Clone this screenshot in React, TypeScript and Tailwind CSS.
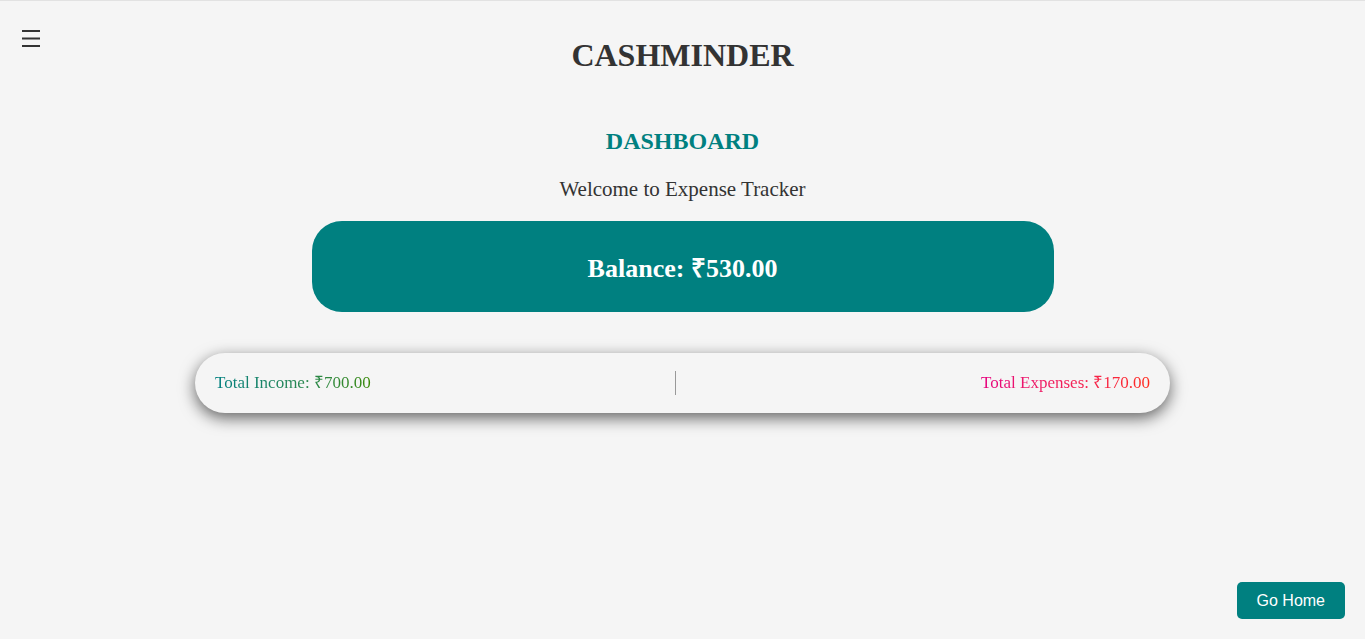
const income = 700;
const expenses = 170;

const fmt = (n: number) => `₹${n.toFixed(2)}`;

const MenuIcon = () => (
    <svg width="18" height="17" viewBox="0 0 18 17" fill="#333">
        <rect x="0" y="0" width="18" height="2" />
        <rect x="0" y="7.5" width="18" height="2" />
        <rect x="0" y="15" width="18" height="2" />
    </svg>
);

const App = () => {
    const balance = income - expenses;

    return (
        <div className="min-h-screen bg-[#f5f5f5] border-t border-[#e2e2e2] font-['Liberation_Serif',serif] text-[#333]">
            {/* Header */}
            <header className="grid grid-cols-[1fr_auto_1fr] items-start px-[22px] pt-[29px]">
                <button className="justify-self-start" aria-label="menu">
                    <MenuIcon />
                </button>
                <h1 className="mt-[6px] text-[32px] leading-[38px] font-bold text-[#333]">
                    CASHMINDER
                </h1>
            </header>

            <main className="flex flex-col items-center">
                <h2 className="mt-[53px] text-[24px] leading-[29px] font-bold text-[#008080]">
                    DASHBOARD
                </h2>
                <p className="mt-[21px] text-[21px] leading-[25px] text-[#333]">
                    Welcome to Expense Tracker
                </p>

                {/* Balance */}
                <div className="mt-[19px] w-[742px] h-[91px] rounded-[30px] bg-[#008080] flex items-center justify-center">
                    <h3 className="mt-[3px] text-[26px] font-bold text-white">
                        Balance: {fmt(balance)}
                    </h3>
                </div>

                {/* Income / Expenses */}
                <div className="mt-[41px] w-[975px] h-[60px] rounded-[30px] bg-[#f5f5f5] px-5 flex items-center justify-between shadow-[0_5px_16px_rgba(0,0,0,0.6)]">
                    <span className="text-[17px] bg-gradient-to-r from-[#008080] to-[#3a8a00] bg-clip-text text-transparent">
                        Total Income: {fmt(income)}
                    </span>
                    <span className="w-px h-6 bg-[#999]" />
                    <span className="text-[17px] bg-gradient-to-r from-[#e6007e] to-[#ff2a1a] bg-clip-text text-transparent">
                        Total Expenses: {fmt(expenses)}
                    </span>
                </div>
            </main>

            <button className="fixed right-[20px] bottom-[20px] rounded-[5px] bg-[#008080] px-5 py-[9px] text-[16px] leading-[19px] text-white font-['Liberation_Sans',Arial,sans-serif]">
                Go Home
            </button>
        </div>
    );
};

export default App;
